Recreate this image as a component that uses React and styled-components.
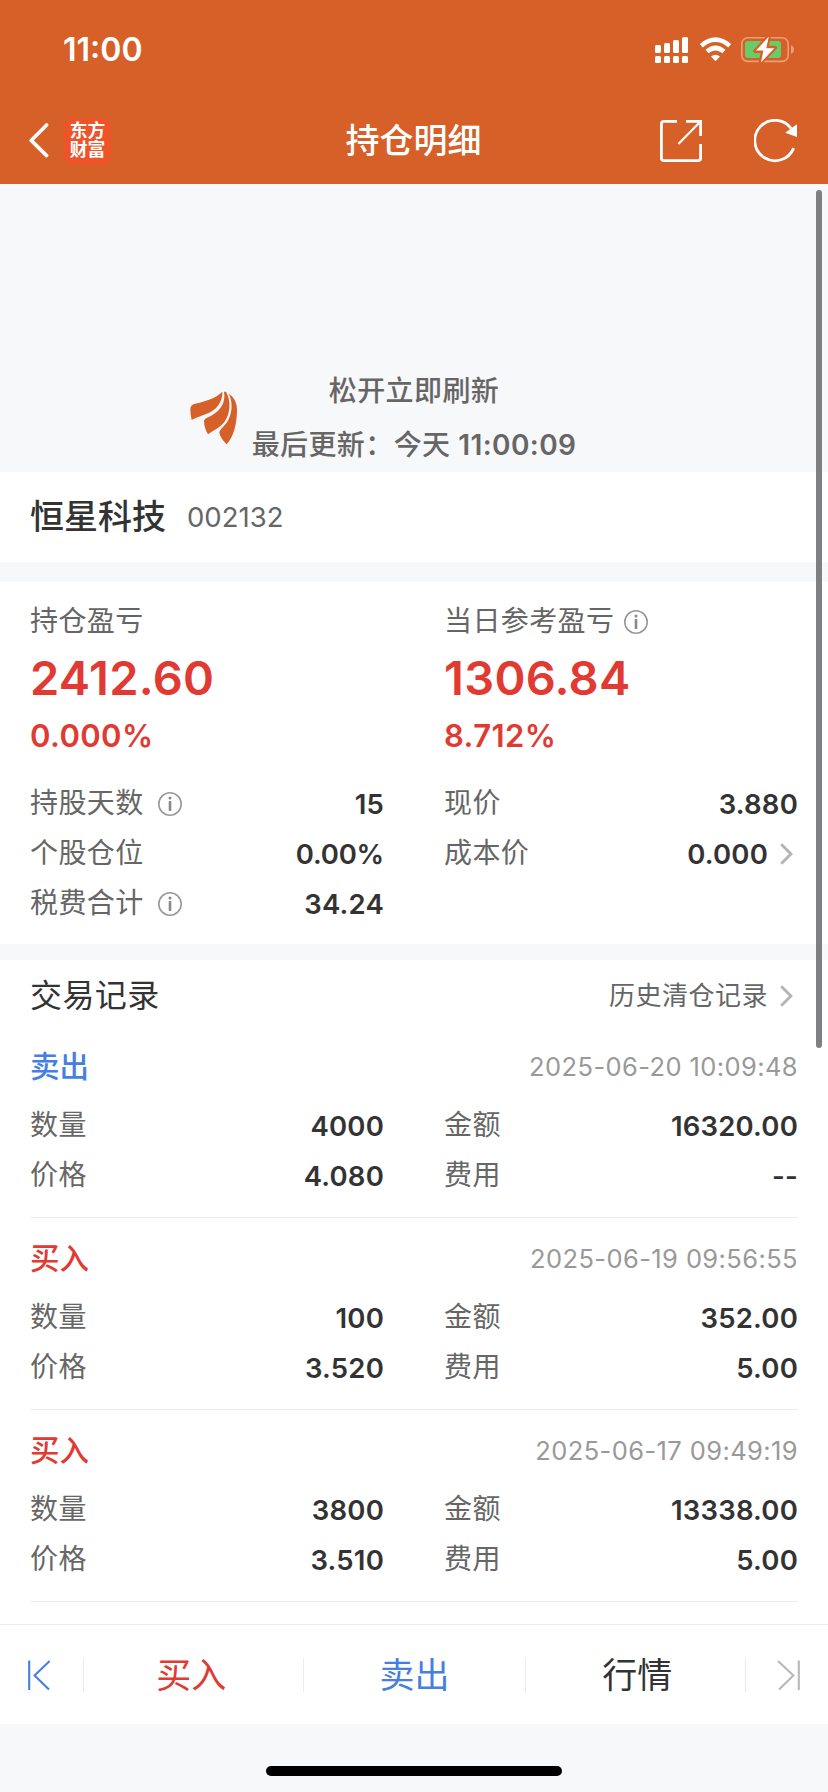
import React from 'react'
import styled, { createGlobalStyle } from 'styled-components';

const details = [
  [
    { label: '持股天数', value: '15', info: true },
    { label: '个股仓位', value: '0.00%' },
    { label: '税费合计', value: '34.24', info: true },
  ],
  [
    { label: '现价', value: '3.880' },
    { label: '成本价', value: '0.000', link: true },
  ],
];

const records = [
  { type: '卖出', sell: true, time: '2025-06-20 10:09:48', count: '4000', price: '4.080', amount: '16320.00', fee: '--' },
  { type: '买入', time: '2025-06-19 09:56:55', count: '100', price: '3.520', amount: '352.00', fee: '5.00' },
  { type: '买入', time: '2025-06-17 09:49:19', count: '3800', price: '3.510', amount: '13338.00', fee: '5.00' },
];

const StatusIcons = () => (
  <svg width="140" height="28" viewBox="655 36 140 28" fill="#fff">
    <rect x="655" y="45" width="6" height="8" rx="1.5" />
    <rect x="664" y="43" width="6" height="10" rx="1.5" />
    <rect x="673" y="40" width="6" height="13" rx="1.5" />
    <rect x="682" y="37" width="6" height="16" rx="1.5" />
    <rect x="655" y="56" width="6" height="7" rx="1.5" />
    <rect x="664" y="56" width="6" height="7" rx="1.5" />
    <rect x="673" y="56" width="6" height="7" rx="1.5" />
    <rect x="682" y="56" width="6" height="7" rx="1.5" />
    <path d="M715.5 61.2 L711 56.6 Q715.5 52.8 720 56.6 Z" />
    <path d="M707 51.6 Q715.5 44.4 724 51.6" fill="none" stroke="#fff" strokeWidth="4.6" />
    <path d="M701.3 45.7 Q715.5 33.7 729.7 45.7" fill="none" stroke="#fff" strokeWidth="4.6" />
    <rect x="741.8" y="37.8" width="46.4" height="23.6" rx="6" fill="none" stroke="#e99f78" strokeWidth="1.6" />
    <path d="M791 45.3 Q794 46.4 794 49.6 Q794 52.8 791 53.9 Z" fill="#e99f78" />
    <rect x="745" y="41" width="36" height="17" rx="3.2" fill="#67ce67" />
    <path d="M768.8 36.4 L755.2 51 H763 L760.6 62.6 L775 47.7 H766.6 Z" stroke="#d75f28" strokeWidth="4" strokeLinejoin="round" />
    <path d="M768.8 36.6 L756 50.6 H763.4 L761 62.4 L774.4 48.2 H766.3 Z" />
  </svg>
);

const BackIcon = () => (
  <svg width="20" height="36" viewBox="0 0 20 36" fill="none" stroke="#fff" strokeWidth="3.6" strokeLinecap="round" strokeLinejoin="round">
    <path d="M17.6 2 L2.2 17.4 L17.6 32.6" />
  </svg>
);

const ShareIcon = () => (
  <svg width="42" height="42" viewBox="0 0 42 42" fill="none" stroke="#fff" strokeWidth="2.8">
    <path d="M17 1.4 H4 Q1.4 1.4 1.4 4 V38 Q1.4 40.6 4 40.6 H38 Q40.6 40.6 40.6 38 V24" />
    <path d="M26 1.4 H40.6 V16" />
    <path d="M40 2 L18.4 24" strokeWidth="2.2" />
  </svg>
);

const ReloadIcon = () => (
  <svg width="44" height="44" viewBox="0 0 44 44">
    <path d="M37.3 9.6 A20.2 20.2 0 1 0 39.7 29.1" fill="none" stroke="#fff" strokeWidth="2.8" />
    <path d="M43 5.3 V18 L31.2 13.7 Z" fill="#fff" />
  </svg>
);

const FeatherLogo = () => (
  <svg width="48" height="54" viewBox="0 0 144 162" fill="#d75f28">
    <path d="M97 2 C78 22 43 32 15 38 Q1 41 1 55 Q1 72 5 87 C24 75 52 71 72 56 C88 44 98 24 97 2 Z" />
    <path d="M102 2 C108 32 92 55 73 68 C56 80 42 81 42 91 Q43 112 54 130 C64 121 88 113 103 93 C121 68 124 30 108 2 Z" />
    <path d="M116 8 C130 16 141 32 141 57 C141 97 131 138 110 160 C96 146 90 136 88 124 C90 114 107 103 115 87 C129 59 127 28 116 8 Z" />
  </svg>
);

const InfoIcon = () => (
  <svg width="24" height="24" viewBox="0 0 24 24">
    <circle cx="12" cy="12" r="11.2" fill="none" stroke="#999" strokeWidth="1.6" />
    <circle cx="12" cy="6" r="1.5" fill="#888" />
    <rect x="10.7" y="9" width="2.6" height="10" rx="0.8" fill="#888" />
  </svg>
);

const Arrow = () => (
  <svg width="13" height="22" viewBox="0 0 13 22" fill="none" stroke="#b4b4b4" strokeWidth="2.9">
    <path d="M1.2 1.2 L11 11 L1.2 20.8" />
  </svg>
);

const EdgeIcon = ({ flip, color }) => (
  <svg width="23" height="32" viewBox="0 0 23 32" fill="none" stroke={color} strokeWidth="2.1">
    {flip
      ? <path d="M1 2 L16.4 16.5 L2 30.6 M21.8 1.4 V31" />
      : <path d="M1.2 1.4 V31 M21.6 2 L6.6 16.5 L21 30.6" />}
  </svg>
);

const Row = ({ label, value, info, link }) => (
  <DetailRow>
    <Label>{label}</Label>
    {info && <InfoIcon />}
    <Value $percent={value.endsWith('%')}>{value}</Value>
    {link && <ArrowBox><Arrow /></ArrowBox>}
  </DetailRow>
);

const App = () => {
  return (
    <Page>
      <GlobalStyle />
      <Header>
        <StatusBar>
          <Clock>11:00</Clock>
          <StatusIcons />
        </StatusBar>
        <Nav>
          <NavLeft>
            <BackIcon />
            <Badge><span>东方</span><span>财富</span></Badge>
          </NavLeft>
          <Title>持仓明细</Title>
          <NavRight>
            <ShareIcon />
            <ReloadIcon />
          </NavRight>
        </Nav>
      </Header>
      <Content>
        <Refresh>
          <LogoBox><FeatherLogo /></LogoBox>
          <RefreshText>
            <p>松开立即刷新</p>
            <p>最后更新：今天 <Time>11:00:09</Time></p>
          </RefreshText>
        </Refresh>
        <Stock>
          <StockName>恒星科技</StockName>
          <StockCode>002132</StockCode>
        </Stock>
        <Summary>
          <Columns>
            <div>
              <ProfitLabel>持仓盈亏</ProfitLabel>
              <Profit>2412.60</Profit>
              <Percent>0.000%</Percent>
            </div>
            <div>
              <ProfitLabel>当日参考盈亏<InfoIcon /></ProfitLabel>
              <Profit>1306.84</Profit>
              <Percent>8.712%</Percent>
            </div>
          </Columns>
          <Columns $top={21}>
            {details.map((column, i) => (
              <div key={i}>
                {column.map((item) => <Row key={item.label} {...item} />)}
              </div>
            ))}
          </Columns>
        </Summary>
        <Records>
          <RecordsHead>
            <h2>交易记录</h2>
            <History>历史清仓记录</History>
            <ArrowBox><Arrow /></ArrowBox>
          </RecordsHead>
          {records.map((record) => (
            <Record key={record.time}>
              <RecordHead>
                <Side $sell={record.sell}>{record.type}</Side>
                <RecordTime>{record.time}</RecordTime>
              </RecordHead>
              <Columns>
                <Row label="数量" value={record.count} />
                <Row label="金额" value={record.amount} />
                <Row label="价格" value={record.price} />
                <Row label="费用" value={record.fee} />
              </Columns>
            </Record>
          ))}
        </Records>
        <ScrollBar />
      </Content>
      <Footer>
        <Edge><EdgeIcon color="#467fe0" /></Edge>
        <Action $color="#e03a32">买入</Action>
        <Action $color="#467fe0">卖出</Action>
        <Action $color="#333">行情</Action>
        <Edge $right><EdgeIcon flip color="#b8b8b8" /></Edge>
      </Footer>
      <HomeArea><HomeBar /></HomeArea>
    </Page>
  )
}

const GlobalStyle = createGlobalStyle`
* {
  margin: 0;
  padding: 0;
  box-sizing: border-box;
}
body {
  background: #f7f8fa;
  font-family: Inter, "Noto Sans CJK SC", sans-serif;
  line-height: 1.4;
}
svg {
  display: block;
  flex: none;
}
`;

const Page = styled.div`
display: flex;
flex-direction: column;
width: 828px;
height: 1792px;
overflow: hidden;
color: #333;
`;

const Header = styled.header`
height: 184px;
background: #d75f28;
color: #fff;
`;

const StatusBar = styled.div`
display: flex;
justify-content: space-between;
align-items: center;
height: 100px;
padding: 0 33px 0 63px;
`;

const Clock = styled.span`
font-size: 32px;
font-weight: 600;
`;

const Nav = styled.nav`
display: grid;
grid-template-columns: 1fr auto 1fr;
align-items: center;
height: 82px;
padding: 0 30px 0 29px;
`;

const NavLeft = styled.div`
display: flex;
align-items: center;
gap: 15px;
`;

const NavRight = styled.div`
display: flex;
align-items: center;
justify-content: flex-end;
gap: 52px;
`;

const Badge = styled.div`
display: flex;
flex-direction: column;
align-items: center;
justify-content: center;
width: 47px;
height: 47px;
padding-bottom: 2px;
border-radius: 10px;
background: #ed5429;
font-size: 17.8px;
font-weight: 700;
line-height: 19.5px;
`;

const Title = styled.h1`
font-size: 34px;
font-weight: 500;
line-height: 48px;
`;

const Content = styled.main`
position: relative;
height: 1440px;
`;

const Refresh = styled.div`
display: grid;
grid-template-columns: 1fr auto 1fr;
align-items: end;
height: 288px;
`;

const LogoBox = styled.div`
display: flex;
justify-content: flex-end;
padding: 0 14px 27px 0;
`;

const RefreshText = styled.div`
color: #666;
font-size: 28px;
font-weight: 500;
letter-spacing: 0.4px;
line-height: 54px;
text-align: center;
`;

const Time = styled.span`
font-weight: 600;
`;

const Stock = styled.section`
display: flex;
align-items: center;
gap: 21px;
height: 90px;
padding: 0 30px;
background: #fff;
`;

const StockName = styled.h2`
font-size: 34px;
font-weight: 500;
`;

const StockCode = styled.span`
color: #666;
font-size: 27.5px;
`;

const Summary = styled.section`
height: 362px;
margin-top: 20px;
padding: 20px 30px 0;
background: #fff;
`;

const Columns = styled.div`
display: grid;
grid-template-columns: 354px 354px;
column-gap: 60px;
margin-top: ${({ $top = 0 }) => $top}px;
`;

const ProfitLabel = styled.div`
display: flex;
align-items: center;
gap: 10px;
height: 40px;
color: #666;
font-size: 28px;
letter-spacing: 0.4px;
`;

const Profit = styled.div`
color: #e03a32;
font-size: 47px;
font-weight: 600;
letter-spacing: 0.3px;
line-height: 72px;
`;

const Percent = styled.div`
color: #e03a32;
font-size: 31px;
font-weight: 600;
letter-spacing: 0.4px;
line-height: 44px;
`;

const DetailRow = styled.div`
display: flex;
align-items: center;
height: 50px;
`;

const Label = styled.span`
margin-right: 14px;
color: #666;
font-size: 28px;
letter-spacing: 0.4px;
`;

const Value = styled.span`
margin-left: auto;
font-size: 27.5px;
font-weight: 600;
letter-spacing: ${({ $percent }) => ($percent ? '-0.2px' : '0.2px')};
`;

const ArrowBox = styled.span`
padding: 0 5px 0 12px;
`;

const Records = styled.section`
height: 664px;
margin-top: 16px;
padding: 6px 30px 0;
background: #fff;
`;

const RecordsHead = styled.div`
display: flex;
align-items: center;
height: 60px;
h2 {
  font-size: 32px;
  font-weight: 400;
  letter-spacing: 0.4px;
}
`;

const History = styled.span`
margin-left: auto;
color: #666;
font-size: 26px;
letter-spacing: 0.5px;
`;

const Record = styled.article`
height: 192px;
padding-top: 6px;
border-bottom: 1px solid #ececee;
`;

const RecordHead = styled.div`
display: flex;
align-items: center;
justify-content: space-between;
height: 69px;
`;

const Side = styled.span`
color: ${({ $sell }) => ($sell ? '#467fe0' : '#e03a32')};
font-size: 29.5px;
font-weight: 500;
`;

const RecordTime = styled.time`
color: #999;
font-size: 25.5px;
letter-spacing: 0.4px;
`;

const ScrollBar = styled.div`
position: absolute;
top: 6px;
right: 6px;
width: 6px;
height: 858px;
border-radius: 3px;
background: #7e7f80;
`;

const Footer = styled.footer`
display: grid;
grid-template-columns: 80px 1fr 1fr 1fr 80px;
align-items: center;
height: 100px;
border-top: 1px solid #ececee;
background: #fff;
`;

const Edge = styled.div`
display: flex;
justify-content: ${({ $right }) => ($right ? 'flex-end' : 'flex-start')};
align-items: center;
height: 34px;
margin: ${({ $right }) => ($right ? '0 0 0 -3px' : '0 -4px 0 0')};
padding: 0 28px;
border: solid #ececee;
border-width: ${({ $right }) => ($right ? '0 0 0 1px' : '0 1px 0 0')};
`;

const Action = styled.div`
height: 34px;
color: ${({ $color }) => $color};
font-size: 35px;
line-height: 34px;
text-align: center;
& + & {
  border-left: 1px solid #ececee;
}
`;

const HomeArea = styled.div`
display: flex;
justify-content: center;
height: 68px;
padding-top: 42px;
`;

const HomeBar = styled.div`
width: 296px;
height: 10px;
border-radius: 5px;
background: #000;
`;

export default App;
